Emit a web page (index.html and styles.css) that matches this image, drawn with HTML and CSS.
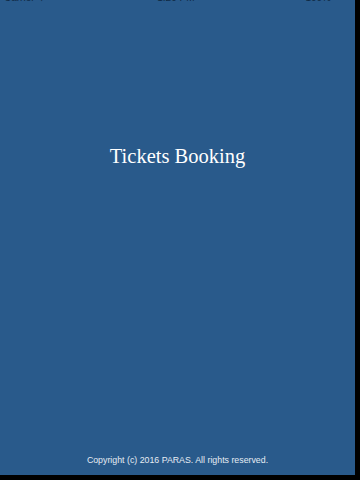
FILE: index.html
```html
<!DOCTYPE html>
<html>
<head>
<meta charset="utf-8">
<link rel="stylesheet" href="styles.css">
</head>
<body>
<div class="screen">
  <div class="status">
    <span class="carrier">Carrier ⌔</span>
    <span class="time">1:20 PM</span>
    <span class="battery">100% <span class="batt"></span></span>
  </div>
  <div class="main">
    <h1 class="title">Tickets Booking</h1>
  </div>
  <div class="footer">Copyright (c) 2016 PARAS. All rights reserved.</div>
</div>
</body>
</html>
```
FILE: styles.css
```css
html, body {
  margin: 0;
  padding: 0;
  background: #000;
  width: 360px;
  height: 480px;
  overflow: hidden;
}
.screen {
  width: 355px;
  height: 475px;
  background: #295a8b;
  display: flex;
  flex-direction: column;
  overflow: hidden;
}
.status {
  height: 14px;
  margin-top: -10px;
  display: flex;
  justify-content: space-between;
  align-items: center;
  padding: 0 4px;
  font-family: "Liberation Sans", Arial, sans-serif;
  font-size: 10px;
  color: #0f2a45;
}
.battery {
  display: flex;
  align-items: center;
  gap: 2px;
}
.batt {
  display: inline-block;
  width: 18px;
  height: 6px;
  background: #0f2a45;
}
.main {
  flex: 1;
  display: flex;
  justify-content: center;
  align-items: flex-start;
  padding-top: 140px;
}
.title {
  margin: 0;
  font-family: "Liberation Serif", "Times New Roman", serif;
  font-weight: normal;
  font-size: 20.5px;
  color: #fff;
  line-height: 1.2;
}
.footer {
  font-family: "Liberation Sans", Arial, sans-serif;
  font-size: 8.8px;
  color: #e6ecf3;
  text-align: center;
  padding-bottom: 10px;
}
```
